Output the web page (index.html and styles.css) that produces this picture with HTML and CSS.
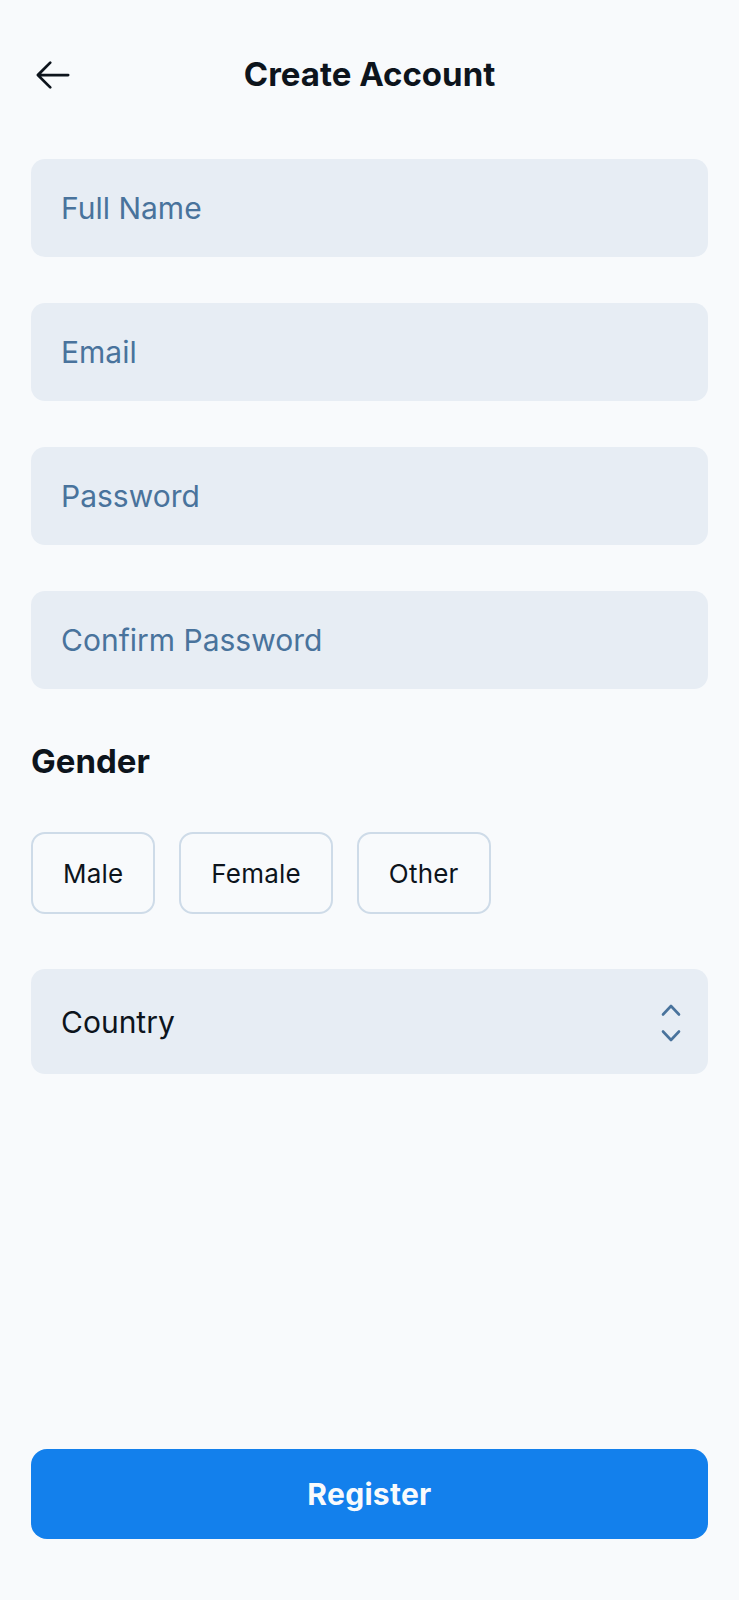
FILE: index.html
```html
<!DOCTYPE html>
<html lang="en">
<head>
<meta charset="utf-8">
<title>Create Account</title>
<link rel="stylesheet" href="styles.css">
</head>
<body>
<div class="screen">
  <header class="topbar">
    <button class="back" aria-label="Back">
      <svg width="44" height="44" viewBox="0 0 256 256" fill="currentColor"><path d="M224,128a8,8,0,0,1-8,8H59.31l58.35,58.34a8,8,0,0,1-11.32,11.32l-72-72a8,8,0,0,1,0-11.32l72-72a8,8,0,0,1,11.32,11.32L59.31,120H216A8,8,0,0,1,224,128Z"/></svg>
    </button>
    <h1 class="title">Create Account</h1>
    <span class="spacer"></span>
  </header>

  <main class="form">
    <div class="field"><span class="placeholder">Full Name</span></div>
    <div class="field"><span class="placeholder">Email</span></div>
    <div class="field"><span class="placeholder">Password</span></div>
    <div class="field"><span class="placeholder">Confirm Password</span></div>

    <h2 class="section">Gender</h2>
    <div class="chips">
      <button class="chip">Male</button>
      <button class="chip">Female</button>
      <button class="chip">Other</button>
    </div>

    <div class="select">
      <span class="select-value">Country</span>
      <svg class="caret" width="20" height="38" viewBox="0 0 20 38" fill="none" stroke="#49739c" stroke-width="2.6" stroke-linecap="round" stroke-linejoin="round"><path d="M2 10.5 L10 2 L18 10.5"/><path d="M2 27.5 L10 36 L18 27.5"/></svg>
    </div>
  </main>

  <footer class="footer">
    <button class="primary">Register</button>
  </footer>
</div>
</body>
</html>
```

FILE: styles.css
```css
* { box-sizing: border-box; }

html, body {
  margin: 0;
  padding: 0;
  background: #f8fafc;
}

body {
  font-family: Inter, "Noto Sans", "Liberation Sans", sans-serif;
  color: #0d141c;
}

.screen {
  min-height: 100vh;
  display: flex;
  flex-direction: column;
  padding: 0 31px 61px;
}

.topbar {
  display: grid;
  grid-template-columns: 44px 1fr 44px;
  align-items: center;
  height: 44px;
  margin-top: 53px;
}

.back {
  width: 44px;
  height: 44px;
  padding: 0;
  border: 0;
  background: none;
  color: #0d141c;
  display: flex;
}

.title {
  margin: 0 0 3px;
  text-align: center;
  font-size: 33px;
  line-height: 40px;
  font-weight: 700;
  letter-spacing: 0;
}

.form {
  display: flex;
  flex-direction: column;
  margin-top: 62px;
}

.field {
  height: 98px;
  border-radius: 14px;
  background: #e7edf4;
  display: flex;
  align-items: center;
  padding: 0 30px;
  margin-bottom: 46px;
}

.field:nth-child(4) { margin-bottom: 0; }

.placeholder {
  font-size: 30px;
  color: #49739c;
  line-height: 1.2;
}

.section {
  margin: 52px 0 0;
  font-size: 33px;
  line-height: 40px;
  font-weight: 700;
  letter-spacing: 0;
}

.chips {
  display: flex;
  gap: 24px;
  margin-top: 51px;
}

.chip {
  height: 82px;
  padding: 0 30px;
  border: 2px solid #cedbe8;
  border-radius: 14px;
  background: transparent;
  font-family: inherit;
  font-size: 26px;
  font-weight: 400;
  letter-spacing: 0.2px;
  color: #0d141c;
}

.select {
  height: 105px;
  margin-top: 55px;
  border-radius: 14px;
  background: #e7edf4;
  display: flex;
  align-items: center;
  justify-content: space-between;
  padding: 0 27px 0 30px;
}

.select-value {
  font-size: 30px;
  color: #0d141c;
  line-height: 1.2;
}

.caret { display: block; margin-top: 2px; }

.footer {
  margin-top: auto;
}

.primary {
  width: 100%;
  height: 90px;
  border: 0;
  border-radius: 16px;
  background: #1380ec;
  color: #f8fafc;
  font-family: inherit;
  font-size: 30px;
  font-weight: 700;
  letter-spacing: 0.3px;
}
```
